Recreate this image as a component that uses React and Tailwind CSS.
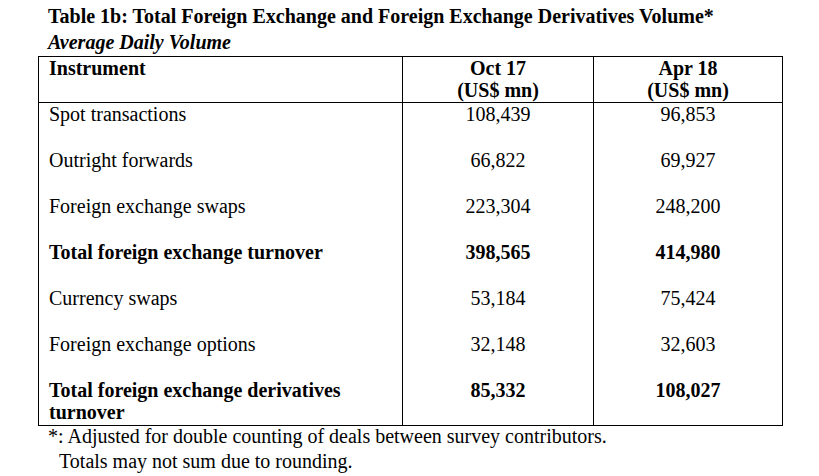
const rows = [
  { label: "Spot transactions", oct: "108,439", apr: "96,853" },
  { label: "Outright forwards", oct: "66,822", apr: "69,927" },
  { label: "Foreign exchange swaps", oct: "223,304", apr: "248,200" },
  { label: "Total foreign exchange turnover", oct: "398,565", apr: "414,980", bold: true },
  { label: "Currency swaps", oct: "53,184", apr: "75,424" },
  { label: "Foreign exchange options", oct: "32,148", apr: "32,603" },
  { label: "Total foreign exchange derivatives turnover", oct: "85,332", apr: "108,027", bold: true },
];

const App = () => {
  return (
    <div className="w-[819px] h-[476px] bg-white text-black overflow-hidden font-['Liberation_Serif','Times_New_Roman',serif]">
      <div className="pl-[48px] pt-[3px]">
        <h1 className="text-[20px] leading-[26px] font-bold">
          Table 1b: Total Foreign Exchange and Foreign Exchange Derivatives Volume*
        </h1>
        <h2 className="text-[20px] leading-[27px] font-bold italic">Average Daily Volume</h2>
      </div>

      <div className="ml-[38px] w-[745px] border border-black text-[20px] leading-[22px]">
        {/* header */}
        <div className="grid grid-cols-[363px_191px_189px] h-[46px] border-b border-black font-bold">
          <div className="pl-[10px]">Instrument</div>
          <div className="border-l border-black text-center">
            Oct 17
            <br />
            (US$ mn)
          </div>
          <div className="border-l border-black text-center">
            Apr 18
            <br />
            (US$ mn)
          </div>
        </div>

        {rows.map((row) => (
          <div
            key={row.label}
            className={`grid grid-cols-[363px_191px_189px] h-[46px] ${row.bold ? "font-bold" : ""}`}
          >
            <div className="pl-[10px] pr-[10px]">{row.label}</div>
            <div className="border-l border-black text-center">{row.oct}</div>
            <div className="border-l border-black text-center">{row.apr}</div>
          </div>
        ))}
      </div>

      <div className="pl-[48px] -mt-[2px] text-[20px] leading-[25px]">
        <p>*: Adjusted for double counting of deals between survey contributors.</p>
        <p className="pl-[11px]">Totals may not sum due to rounding.</p>
      </div>
    </div>
  );
};

export default App;
